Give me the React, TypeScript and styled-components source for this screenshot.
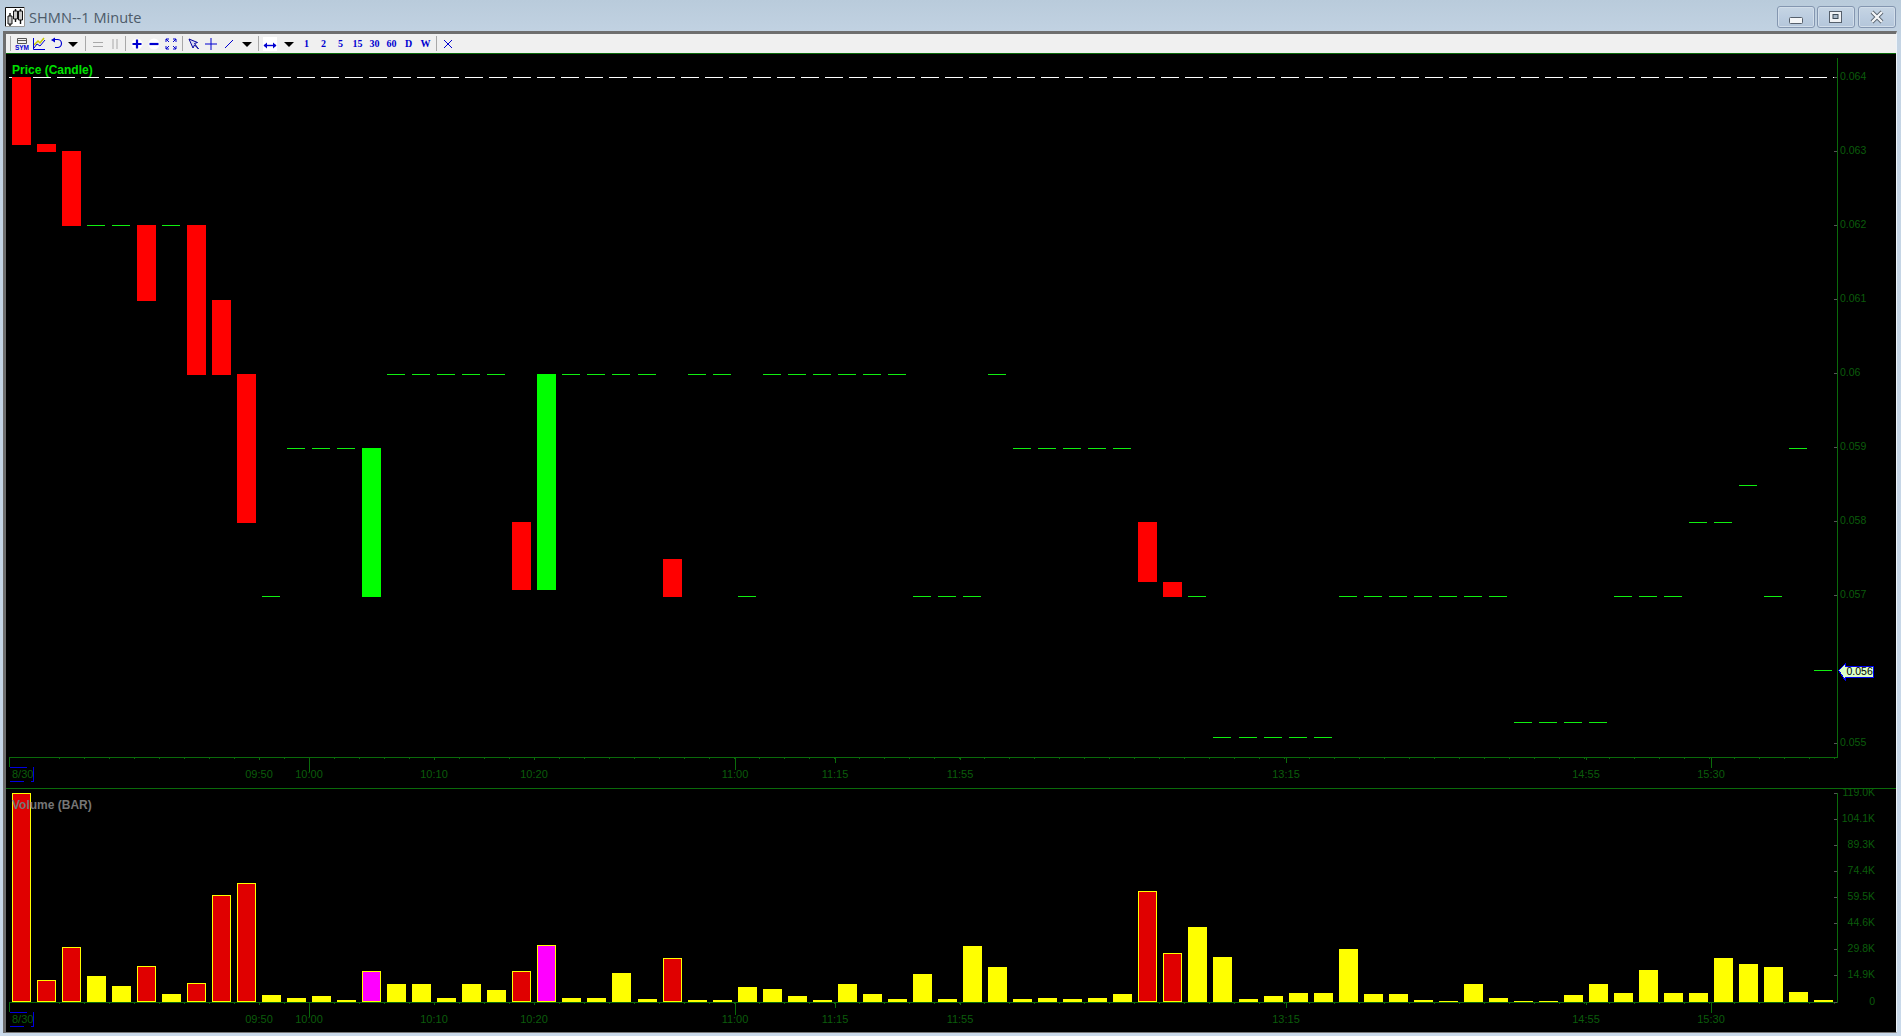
import React from 'react';
import styled, { createGlobalStyle } from 'styled-components';

const GlobalStyle = createGlobalStyle`
  html, body {
    margin: 0;
    padding: 0;
    height: 100%;
    overflow: hidden;
  }
  #root {
    height: 100%;
  }
`;

type Kind = 'R' | 'G' | 'F';
// kind, top, bottom, volume top (all in page pixels), volume colour
type Row = [Kind, number, number, number, 'y' | 'r' | 'm'];

const rows: Row[] = [
  ['R', 77, 145, 793, 'r'],
  ['R', 144, 152, 980, 'r'],
  ['R', 151, 226, 947, 'r'],
  ['F', 225, 225, 976, 'y'],
  ['F', 225, 225, 986, 'y'],
  ['R', 225, 301, 966, 'r'],
  ['F', 225, 225, 994, 'y'],
  ['R', 225, 375, 983, 'r'],
  ['R', 300, 375, 895, 'r'],
  ['R', 374, 523, 883, 'r'],
  ['F', 596, 596, 995, 'y'],
  ['F', 448, 448, 998, 'y'],
  ['F', 448, 448, 996, 'y'],
  ['F', 448, 448, 1000, 'y'],
  ['G', 448, 597, 971, 'm'],
  ['F', 374, 374, 984, 'y'],
  ['F', 374, 374, 984, 'y'],
  ['F', 374, 374, 998, 'y'],
  ['F', 374, 374, 984, 'y'],
  ['F', 374, 374, 990, 'y'],
  ['R', 522, 590, 971, 'r'],
  ['G', 374, 590, 945, 'm'],
  ['F', 374, 374, 998, 'y'],
  ['F', 374, 374, 998, 'y'],
  ['F', 374, 374, 973, 'y'],
  ['F', 374, 374, 999, 'y'],
  ['R', 559, 597, 958, 'r'],
  ['F', 374, 374, 1000, 'y'],
  ['F', 374, 374, 1000, 'y'],
  ['F', 596, 596, 987, 'y'],
  ['F', 374, 374, 989, 'y'],
  ['F', 374, 374, 996, 'y'],
  ['F', 374, 374, 1000, 'y'],
  ['F', 374, 374, 984, 'y'],
  ['F', 374, 374, 994, 'y'],
  ['F', 374, 374, 999, 'y'],
  ['F', 596, 596, 974, 'y'],
  ['F', 596, 596, 999, 'y'],
  ['F', 596, 596, 946, 'y'],
  ['F', 374, 374, 967, 'y'],
  ['F', 448, 448, 999, 'y'],
  ['F', 448, 448, 998, 'y'],
  ['F', 448, 448, 999, 'y'],
  ['F', 448, 448, 998, 'y'],
  ['F', 448, 448, 994, 'y'],
  ['R', 522, 582, 891, 'r'],
  ['R', 582, 597, 953, 'r'],
  ['F', 596, 596, 927, 'y'],
  ['F', 737, 737, 957, 'y'],
  ['F', 737, 737, 999, 'y'],
  ['F', 737, 737, 996, 'y'],
  ['F', 737, 737, 993, 'y'],
  ['F', 737, 737, 993, 'y'],
  ['F', 596, 596, 949, 'y'],
  ['F', 596, 596, 994, 'y'],
  ['F', 596, 596, 994, 'y'],
  ['F', 596, 596, 1000, 'y'],
  ['F', 596, 596, 1001, 'y'],
  ['F', 596, 596, 984, 'y'],
  ['F', 596, 596, 998, 'y'],
  ['F', 722, 722, 1001, 'y'],
  ['F', 722, 722, 1001, 'y'],
  ['F', 722, 722, 995, 'y'],
  ['F', 722, 722, 984, 'y'],
  ['F', 596, 596, 993, 'y'],
  ['F', 596, 596, 970, 'y'],
  ['F', 596, 596, 993, 'y'],
  ['F', 522, 522, 993, 'y'],
  ['F', 522, 522, 958, 'y'],
  ['F', 485, 485, 964, 'y'],
  ['F', 596, 596, 967, 'y'],
  ['F', 448, 448, 992, 'y'],
  ['F', 670, 670, 1000, 'y'],
];

const barX = (i: number) => 12 + 25 * i + (i >= 49 ? 2 : i >= 25 ? 1 : 0);

const times: [string, number, number][] = [
  ['09:50', 259, 3],
  ['10:00', 309, 15],
  ['10:10', 434, 3],
  ['10:20', 534, 3],
  ['11:00', 735, 13],
  ['11:15', 835, 6],
  ['11:55', 960, 3],
  ['13:15', 1286, 6],
  ['14:55', 1586, 3],
  ['15:30', 1711, 11],
];

const priceLabels: [string, number][] = [
  ['0.064', 78],
  ['0.063', 152],
  ['0.062', 226],
  ['0.061', 300],
  ['0.06', 374],
  ['0.059', 448],
  ['0.058', 522],
  ['0.057', 596],
  ['0.055', 744],
];

const volumeLabels: [string, number][] = [
  ['119.0K', 793],
  ['104.1K', 819],
  ['89.3K', 845],
  ['74.4K', 871],
  ['59.5K', 897],
  ['44.6K', 923],
  ['29.8K', 949],
  ['14.9K', 975],
  ['0', 1002],
];

const Window = styled.div`
  display: flex;
  flex-direction: column;
  height: 1036px;
  box-sizing: border-box;
  padding: 0 4px 3px 3px;
  background: linear-gradient(180deg, #b9cbdb 0%, #c4d4e4 4%, #c9d9ea 100%);
`;

const TitleBar = styled.header`
  display: flex;
  align-items: flex-start;
  height: 31px;
  padding: 6px 1px 0 2px;
  box-sizing: border-box;
`;

const TitleIcon = styled.svg`
  display: block;
  width: 20px;
  height: 20px;
  margin-top: 1px;
`;

const TitleText = styled.span`
  margin-left: 4px;
  font-family: 'Open Sans', sans-serif;
  font-size: 14.6px;
  line-height: 20px;
  margin-top: 1px;
  color: #4d5b69;
`;

const WindowControls = styled.div`
  display: flex;
  gap: 2px;
  margin-left: auto;
`;

const WindowButton = styled.button`
  display: flex;
  align-items: center;
  justify-content: center;
  width: 38px;
  height: 22px;
  padding: 0;
  border: 1px solid #8496b0;
  border-radius: 3px;
  background: linear-gradient(180deg, #c6d5e4 0%, #bccde0 50%, #b4c6da 100%);
  box-shadow: inset 0 0 0 1px #d2deea;
  &:last-child {
    margin-left: 1px;
  }
`;

const ChartFrame = styled.main`
  flex: 1;
  display: flex;
  flex-direction: column;
  min-height: 0;
  border-top: 3px solid #6e6e6e;
  border-left: 3px solid #6e6e6e;
  border-bottom: 1px solid #777;
  border-right: 1px solid #eef3f8;
  background: #000;
`;

const Toolbar = styled.nav`
  display: flex;
  align-items: center;
  flex: none;
  height: 19px;
  padding-left: 4px;
  background: #f0f0f0;
  border-bottom: 1px solid #0a6a0a;
`;

const Grip = styled.span`
  width: 1px;
  height: 15px;
  margin-right: 2px;
  background: #a8a8a8;
`;

const ToolButton = styled.span<{ $w?: number }>`
  display: flex;
  align-items: center;
  justify-content: center;
  flex: none;
  width: ${({ $w }) => $w ?? 17}px;
  height: 18px;
  font-family: 'Liberation Serif', serif;
  font-weight: bold;
  font-size: 10px;
  color: #0000d0;
`;

const ToolSeparator = styled.span<{ $w: number }>`
  display: flex;
  justify-content: center;
  flex: none;
  width: ${({ $w }) => $w}px;
  &::before {
    content: '';
    width: 1px;
    height: 15px;
    background: #a8a8a8;
  }
`;

const ToolIcon = styled.svg`
  display: block;
  width: 14px;
  height: 14px;
`;

const Pane = styled.section<{ $h: number; $line?: boolean }>`
  position: relative;
  flex: none;
  height: ${({ $h }) => $h}px;
  box-sizing: border-box;
  border-top: ${({ $line }) => ($line ? '1px solid #0a6a0a' : 'none')};
`;

const PaneChart = styled.svg`
  display: block;
  width: 100%;
  height: 100%;
  shape-rendering: crispEdges;
`;

const PaneLegend = styled.span<{ $color: string; $top: number }>`
  position: absolute;
  left: 6px;
  top: ${({ $top }) => $top}px;
  font-family: 'Liberation Sans', sans-serif;
  font-size: 12px;
  font-weight: bold;
  line-height: 14px;
  color: ${({ $color }) => $color};
`;

const AxisText = styled.text`
  font-family: 'Liberation Sans', sans-serif;
  font-size: 11px;
  fill: #0b5c0b;
`;

const PriceText = styled(AxisText)`
  font-size: 10.5px;
`;

const VolumeText = styled(AxisText)`
  font-size: 10.5px;
  text-anchor: end;
`;

const TimeText = styled(AxisText)`
  text-anchor: middle;
`;

const AxisLine = styled.line`
  stroke: #0a6a0a;
  stroke-width: 1;
`;

const AxisTick = styled.line`
  stroke: #555;
  stroke-width: 1;
`;

const PriceTagText = styled.text`
  font-family: 'Liberation Sans', sans-serif;
  font-size: 10.5px;
  fill: #000;
`;

const Caret = () => (
  <ToolIcon viewBox="0 0 14 14">
    <path d="M2 5h10l-5 5z" fill="#000" />
  </ToolIcon>
);

const TimeAxis = ({ y, labelY, top }: { y: number; labelY: number; top?: number }) => (
  <>
    <AxisLine x1={9} x2={1837} y1={y + 0.5} y2={y + 0.5} />
    <AxisLine x1={9.5} x2={9.5} y1={y} y2={y + 10} />
    {Array.from({ length: 72 }, (_, i) => (
      <AxisLine key={i} x1={59.5 + 25 * i} x2={59.5 + 25 * i} y1={y} y2={y + 2} />
    ))}
    {times.map(([label, x, len]) => (
      <React.Fragment key={label}>
        <AxisLine x1={x + 0.5} x2={x + 0.5} y1={y} y2={y + len} />
        <TimeText x={x} y={labelY}>
          {label}
        </TimeText>
      </React.Fragment>
    ))}
    <AxisText x={12} y={labelY}>
      8/30
    </AxisText>
    <path
      d={`M10 ${labelY - 10.5}h17M33.5 ${labelY - 11}v14h-3M10 ${labelY + 3.5}h14`}
      stroke="#0000e0"
      fill="none"
    />
    {top !== undefined && <AxisLine x1={1837.5} x2={1837.5} y1={top} y2={y + 1} />}
  </>
);

const App = () => (
  <>
    <GlobalStyle />
    <Window>
      <TitleBar>
        <TitleIcon viewBox="0 0 20 20">
          <rect width="20" height="20" fill="#fff" />
          <path d="M.5 19.5V.5h19" fill="none" stroke="#111" />
          <path d="M.5 19.5h19V.5" fill="none" stroke="#999" />
          <path d="M5 6v13M10.5 2v13M15.5 2v15" stroke="#111" strokeWidth="1.4" />
          <path d="M3 9h4v8H3zM8.5 4h4v8h-4zM13.5 4h4v9h-4z" fill="#ccc" stroke="#111" />
        </TitleIcon>
        <TitleText>SHMN--1 Minute</TitleText>
        <WindowControls>
          <WindowButton aria-label="Minimize">
            <svg width="14" height="8" viewBox="0 0 14 8" style={{ marginTop: 8 }}>
              <rect x=".5" y=".5" width="13" height="6" rx="1" fill="#f4f6f8" stroke="#56606c" />
            </svg>
          </WindowButton>
          <WindowButton aria-label="Maximize">
            <svg width="14" height="13" viewBox="0 0 14 13">
              <rect x=".5" y=".5" width="12" height="11" fill="#f0f2f5" stroke="#56606c" />
              <rect x="4" y="3.5" width="5" height="4" fill="#a9b8c8" stroke="#3d4a56" />
            </svg>
          </WindowButton>
          <WindowButton aria-label="Close">
            <svg width="14" height="14" viewBox="0 0 14 14">
              <path d="M2 2l10 10M12 2L2 12" stroke="#56606c" strokeWidth="4" />
              <path d="M2 2l10 10M12 2L2 12" stroke="#f4f6f8" strokeWidth="2.4" />
            </svg>
          </WindowButton>
        </WindowControls>
      </TitleBar>
      <ChartFrame>
        <Toolbar>
          <Grip />
          <ToolButton>
            <ToolIcon viewBox="0 0 14 14">
              <path d="M2.5 1.5h9v5h-9z" fill="none" stroke="#555" />
              <path d="M2.5 3.5h9" stroke="#555" />
              <text x="7" y="13" textAnchor="middle" fontFamily="'Liberation Sans', sans-serif" fontSize="6.5" fontWeight="bold" fill="#0000d0">
                SYM
              </text>
            </ToolIcon>
          </ToolButton>
          <ToolButton>
            <ToolIcon viewBox="0 0 14 14">
              <path d="M2 8l4-4 2 2 4-5" fill="none" stroke="#c8c800" strokeWidth="1.5" />
              <path d="M2 11l3-4 3 2 5-6" fill="none" stroke="#0000d0" />
              <path d="M1.5 1v11.5H13" fill="none" stroke="#0000d0" />
            </ToolIcon>
          </ToolButton>
          <ToolButton>
            <ToolIcon viewBox="0 0 14 14">
              <path d="M6 2.5h2.5a4 4 0 0 1 0 8H6" fill="none" stroke="#0000d0" strokeWidth="1.2" />
              <path d="M2 3l4-2.5v5z" fill="#0000d0" />
            </ToolIcon>
          </ToolButton>
          <ToolButton>
            <Caret />
          </ToolButton>
          <ToolSeparator $w={8} />
          <ToolButton>
            <ToolIcon viewBox="0 0 14 14">
              <path d="M2 5.5h10M2 9.5h10" stroke="#a8a8a8" />
            </ToolIcon>
          </ToolButton>
          <ToolButton>
            <ToolIcon viewBox="0 0 14 14">
              <path d="M5 2v10M9 2v10" stroke="#a8a8a8" />
            </ToolIcon>
          </ToolButton>
          <ToolSeparator $w={5} />
          <ToolButton>
            <ToolIcon viewBox="0 0 14 14">
              <circle cx="7" cy="7" r="5.5" fill="#fff" />
              <path d="M7 2.5v9M2.5 7h9" stroke="#0000d0" strokeWidth="2.2" />
            </ToolIcon>
          </ToolButton>
          <ToolButton>
            <ToolIcon viewBox="0 0 14 14">
              <circle cx="7" cy="7" r="5.5" fill="#fff" />
              <path d="M2.5 7h9" stroke="#0000d0" strokeWidth="2.2" />
            </ToolIcon>
          </ToolButton>
          <ToolButton>
            <ToolIcon viewBox="0 0 14 14">
              <path d="M2 5V2h3M9 2h3v3M12 9v3H9M5 12H2V9" fill="none" stroke="#0000d0" />
              <path d="M2 2l3 3M12 2L9 5M12 12L9 9M2 12l3-3" stroke="#0000d0" />
            </ToolIcon>
          </ToolButton>
          <ToolSeparator $w={6} />
          <ToolButton>
            <ToolIcon viewBox="0 0 14 14">
              <path d="M2 2l4 9 1.5-3 4 4-4-5.5 3-1z" fill="#d8d8f0" stroke="#0000a0" />
            </ToolIcon>
          </ToolButton>
          <ToolButton>
            <ToolIcon viewBox="0 0 14 14">
              <path d="M7 1v12M1 7h12" stroke="#0000d0" />
            </ToolIcon>
          </ToolButton>
          <ToolButton $w={19}>
            <ToolIcon viewBox="0 0 14 14">
              <path d="M3 11l8-8" stroke="#0000d0" />
            </ToolIcon>
          </ToolButton>
          <ToolButton>
            <Caret />
          </ToolButton>
          <ToolSeparator $w={6} />
          <ToolButton $w={18}>
            <ToolIcon viewBox="0 0 14 14" style={{ background: '#fff' }}>
              <path d="M1 8.5h12" stroke="#0000d0" strokeWidth="1.4" />
              <path d="M4 5.5v6L0.5 8.5zM10 5.5v6l3.5-3z" fill="#0000d0" />
            </ToolIcon>
          </ToolButton>
          <ToolButton $w={19}>
            <Caret />
          </ToolButton>
          {['1', '2', '5', '15', '30', '60', 'D', 'W'].map(label => (
            <ToolButton key={label}>{label}</ToolButton>
          ))}
          <ToolSeparator $w={5} />
          <ToolButton>
            <ToolIcon viewBox="0 0 14 14">
              <path d="M3 3l8 8M11 3l-8 8" stroke="#0000d0" />
            </ToolIcon>
          </ToolButton>
        </Toolbar>
        <Pane $h={734}>
          <PaneChart viewBox="6 54 1890 734">
            <path d="M9 77.5H1838" stroke="#fff" strokeDasharray="18 6" />
            {rows.map(([kind, top, bottom], i) =>
              kind === 'F' ? (
                <rect key={i} x={barX(i)} y={top} width={18} height={1} fill="#10ee10" />
              ) : (
                <rect
                  key={i}
                  x={barX(i)}
                  y={top}
                  width={19}
                  height={bottom - top}
                  fill={kind === 'R' ? '#ff0000' : '#00ff00'}
                />
              ),
            )}
            <TimeAxis y={757} labelY={778} top={58} />
            {priceLabels.map(([label, y]) => (
              <React.Fragment key={label}>
                <AxisTick x1={1834} x2={1837} y1={y - 0.5} y2={y - 0.5} />
                <PriceText x={1840} y={y + 1.5}>
                  {label}
                </PriceText>
              </React.Fragment>
            ))}
            <path
              d="M1838.5 670.5l7-7v3h28v11h-28v3z"
              fill="#dcffc8"
              stroke="#0000f0"
            />
            <PriceTagText x={1846.5} y={675}>
              0.056
            </PriceTagText>
          </PaneChart>
          <PaneLegend $color="#00e000" $top={9}>
            Price (Candle)
          </PaneLegend>
        </Pane>
        <Pane $h={244} $line>
          <PaneChart viewBox="6 789 1890 243">
            {rows.map(([, , , top, color], i) =>
              color === 'y' ? (
                <rect key={i} x={barX(i)} y={top} width={19} height={1002 - top} fill="#ffff00" />
              ) : (
                <rect
                  key={i}
                  x={barX(i) + 0.5}
                  y={top + 0.5}
                  width={18}
                  height={1001 - top}
                  fill={color === 'r' ? '#e00000' : '#ff00ff'}
                  stroke="#ffff00"
                />
              ),
            )}
            <TimeAxis y={1002} labelY={1023} top={793} />
            {volumeLabels.map(([label, y]) => (
              <React.Fragment key={label}>
                <AxisTick x1={1834} x2={1837} y1={y + 0.5} y2={y + 0.5} />
                <VolumeText x={1875} y={y + 3}>
                  {label}
                </VolumeText>
              </React.Fragment>
            ))}
          </PaneChart>
          <PaneLegend $color="#767676" $top={9}>
            Volume (BAR)
          </PaneLegend>
        </Pane>
      </ChartFrame>
    </Window>
  </>
);

export default App;
